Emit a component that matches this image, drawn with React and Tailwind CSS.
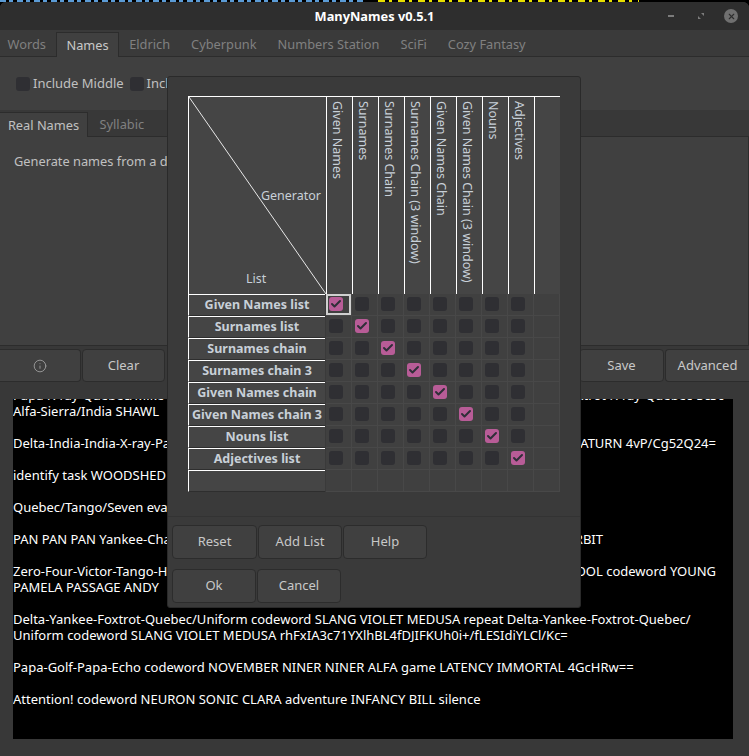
import React from 'react';
import { Check, Info, X } from 'lucide-react';

const tabs = ['Words', 'Names', 'Eldrich', 'Cyberpunk', 'Numbers Station', 'SciFi', 'Cozy Fantasy'];
const columns = ['Given Names', 'Surnames', 'Surnames Chain', 'Surnames Chain (3 window)', 'Given Names Chain', 'Given Names Chain (3 window)', 'Nouns', 'Adjectives', ''];
const rows = ['Given Names list', 'Surnames list', 'Surnames chain', 'Surnames chain 3', 'Given Names chain', 'Given Names chain 3', 'Nouns list', 'Adjectives list', ''];

const Box = ({ checked }) => (
  <div className={`w-[14px] h-[14px] rounded-[3px] flex items-center justify-center ${checked ? 'bg-[#b85c97]' : 'bg-[#2f2f33]'}`}>
    {checked && <Check size={12} strokeWidth={4} className="text-[#2f2f38]" />}
  </div>
);

const Btn = ({ children, className }) => (
  <button className={`rounded-[4px] border border-[#2c2c2c] bg-[#404040] text-[#c8c8c8] text-[13px] flex items-center justify-center ${className}`}>
    {children}
  </button>
);

const Matrix = () => (
  <div className="flex flex-col ml-[20px] mt-[19px]">
    <div className="flex">
      <div className="relative w-[138px] h-[198px] bg-[#454545] border-l-[1px] border-t-[1px] border-white">
        <svg className="absolute left-0 top-0" width="138" height="198">
          <line x1="0" y1="0" x2="137" y2="197" stroke="#e8e8e8" strokeWidth="1" />
        </svg>
        <span className="absolute right-[5px] top-[91px] text-[12.5px] leading-4 text-[#c8d0d8]">Generator</span>
        <span className="absolute left-[57px] top-[174px] text-[12.5px] leading-4 text-[#c8d0d8]">List</span>
      </div>
      {columns.map((c, i) => (
        <div key={i} className="w-[26px] h-[198px] border-l-[1px] border-t-[1px] border-white bg-[#454545] flex justify-center">
          <span className="[writing-mode:vertical-rl] text-[12.5px] leading-4 text-[#c8d0d8] pt-[4px] pr-[5px] whitespace-nowrap">{c}</span>
        </div>
      ))}
    </div>
    {rows.map((r, y) => (
      <div key={y} className="flex h-[22px]">
        <div className="w-[137px] mr-[1px] bg-[#454545] border-l-[1px] border-t-[1px] border-white border-b-[1px] border-b-[#2e2e2e] text-[12.5px] font-bold text-[#c8d0d8] flex items-center justify-center whitespace-nowrap">
          {r}
        </div>
        {columns.map((c, x) => (
          <div key={x} className={`w-[26px] border-r border-b border-[#484848] bg-[#404040] flex items-center pl-[3px] pb-[1px] ${x === 0 && y === 0 ? 'shadow-[inset_0_0_0_2px_#cfcfcf]' : ''}`}>
            {c && r && <Box checked={x === y} />}
          </div>
        ))}
      </div>
    ))}
  </div>
);

const Dialog = () => (
  <div className="absolute left-[167px] top-[76px] w-[414px] h-[532px] bg-[#3a3a3a] border border-[#2a2a2a] rounded-[3px] flex flex-col">
    <div className="h-[440px] border-b border-[#333333]">
      <Matrix />
    </div>
    <div className="flex flex-col gap-[10px] pl-[4px] pt-[8px]">
      <div className="flex gap-[1px]">
        <Btn className="w-[85px] h-[34px]">Reset</Btn>
        <Btn className="w-[84px] h-[34px]">Add List</Btn>
        <Btn className="w-[84px] h-[34px]">Help</Btn>
      </div>
      <div className="flex gap-[1px]">
        <Btn className="w-[84px] h-[34px]">Ok</Btn>
        <Btn className="w-[84px] h-[34px]">Cancel</Btn>
      </div>
    </div>
  </div>
);

export default function App() {
  return (
    <div className="relative w-[749px] h-[756px] bg-black overflow-hidden text-[13px]" style={{ fontFamily: '"Noto Sans", sans-serif' }}>
      {/* terminal behind the window, only the bottom of its text shows */}
      <div className="h-[2px] flex">
        <div className="w-[364px] mr-[14px] bg-[repeating-linear-gradient(90deg,#5b9bd5_0_6px,#000000_6px_9px,#5b9bd5_9px_13px,#000000_13px_17px)]" />
        <div className="w-[261px] bg-[repeating-linear-gradient(90deg,#e8e000_0_7px,#000000_7px_11px,#e8e000_11px_14px,#000000_14px_20px)]" />
      </div>
      <div className="h-[754px] bg-[#383838] rounded-t-[6px] flex flex-col">
        {/* title bar */}
        <div className="relative h-[28px] bg-[#2e2e2e] rounded-t-[6px] flex items-center justify-center pt-[1px] text-white font-bold text-[12.8px]">
          ManyNames v0.5.1
          <div className="absolute right-[11px] top-0 h-full flex items-center">
            <div className="w-[6px] h-[2px] bg-[#7c7c7c] mr-[24px]" />
            <svg className="mr-[20px]" width="6" height="6" viewBox="0 0 6 6">
              <path d="M3 0H6V3ZM0 3V6H3Z" fill="#7c7c7c" />
            </svg>
            <div className="w-[14px] h-[14px] rounded-full bg-[#707070] flex items-center justify-center">
              <X size={9} strokeWidth={3} className="text-[#2e2e2e]" />
            </div>
          </div>
        </div>
        {/* top tabs */}
        <div className="h-[27px] bg-[#3a3a3a] flex border-b border-[#2c2c2c] -ml-[3px] text-[12.8px] text-[#808080]">
          {tabs.map((t) => (
            <div key={t} className={t === 'Names' ? 'h-[25px] mt-[2px] px-[9px] pt-[1px] flex items-center bg-[#404040] border border-b-0 border-[#2c2c2c] text-[#c8c8c8]' : 'px-[10.5px] pt-[3px] flex items-center'}>
              {t}
            </div>
          ))}
        </div>
        <div className="h-[53px] bg-[#404040] flex items-center pl-[16px] gap-[3px] text-[#c0c0c0]">
          <div className="w-[14px] h-[14px] rounded-[3px] bg-[#2f2f33]" />
          <span className="mr-[3px]">Include Middle</span>
          <div className="w-[14px] h-[14px] rounded-[3px] bg-[#2f2f33]" />
          <span>Include</span>
        </div>
        {/* inner tabs */}
        <div className="h-[27px] bg-[#383838] flex border-b border-[#2c2c2c] text-[12.8px] text-[#808080]">
          <div className="h-[25px] mt-[2px] w-[88px] pt-[1px] flex items-center justify-center bg-[#404040] border-r border-t border-[#2c2c2c] text-[#c0c0c0]">Real Names</div>
          <div className="pl-[11.5px] pt-[3px] flex items-center">Syllabic</div>
        </div>
        <div className="h-[209px] bg-[#404040] pl-[14px] pt-[15px] text-[12.8px] text-[#c0c0c0] border-b border-r border-[#2c2c2c]">
          Generate names from a database.
        </div>
        {/* button row */}
        <div className="flex gap-[1px] pt-[3px] h-[53px]">
          <Btn className="w-[81px] h-[33px] rounded-l-none border-l-0"><Info size={14} strokeWidth={1.5} className="text-[#a0a0a0]" /></Btn>
          <Btn className="w-[83px] h-[33px]">Clear</Btn>
          <div className="flex-1" />
          <Btn className="w-[85px] h-[33px]">Save</Btn>
          <Btn className="w-[84px] h-[33px] rounded-r-none border-r-0">Advanced</Btn>
        </div>
        {/* output */}
        <div className="mx-[13px] w-[720px] h-[340px] bg-black text-white text-[13px] leading-[16px] overflow-hidden">
          <p className="-mt-[12px] flex justify-between w-[712px]"><span>Papa-X-ray-Quebec/Mike-Delta</span><span>Mike-Foxtrot-X-ray-Quebec-3c36</span></p>
          <p>Alfa-Sierra/India SHAWL</p>
          <br />
          <p className="flex justify-between w-[703px]"><span>Delta-India-India-X-ray-Papa</span><span>SATURN 4vP/Cg52Q24=</span></p>
          <br />
          <p>identify task WOODSHED</p>
          <br />
          <p>Quebec/Tango/Seven evaluate</p>
          <br />
          <p className="flex justify-between w-[590px]"><span>PAN PAN PAN Yankee-Charlie</span><span>ORBIT</span></p>
          <br />
          <p className="flex justify-between w-[703px]"><span>Zero-Four-Victor-Tango-Hotel</span><span>POOL codeword YOUNG</span></p>
          <p>PAMELA PASSAGE ANDY</p>
          <br />
          <p>Delta-Yankee-Foxtrot-Quebec/Uniform codeword SLANG VIOLET MEDUSA repeat Delta-Yankee-Foxtrot-Quebec/</p>
          <p>Uniform codeword SLANG VIOLET MEDUSA rhFxIA3c71YXlhBL4fDJIFKUh0i+/fLESIdiYLCl/Kc=</p>
          <br />
          <p>Papa-Golf-Papa-Echo codeword NOVEMBER NINER NINER ALFA game LATENCY IMMORTAL 4GcHRw==</p>
          <br />
          <p>Attention! codeword NEURON SONIC CLARA adventure INFANCY BILL silence</p>
        </div>
      </div>
      <Dialog />
    </div>
  );
}
